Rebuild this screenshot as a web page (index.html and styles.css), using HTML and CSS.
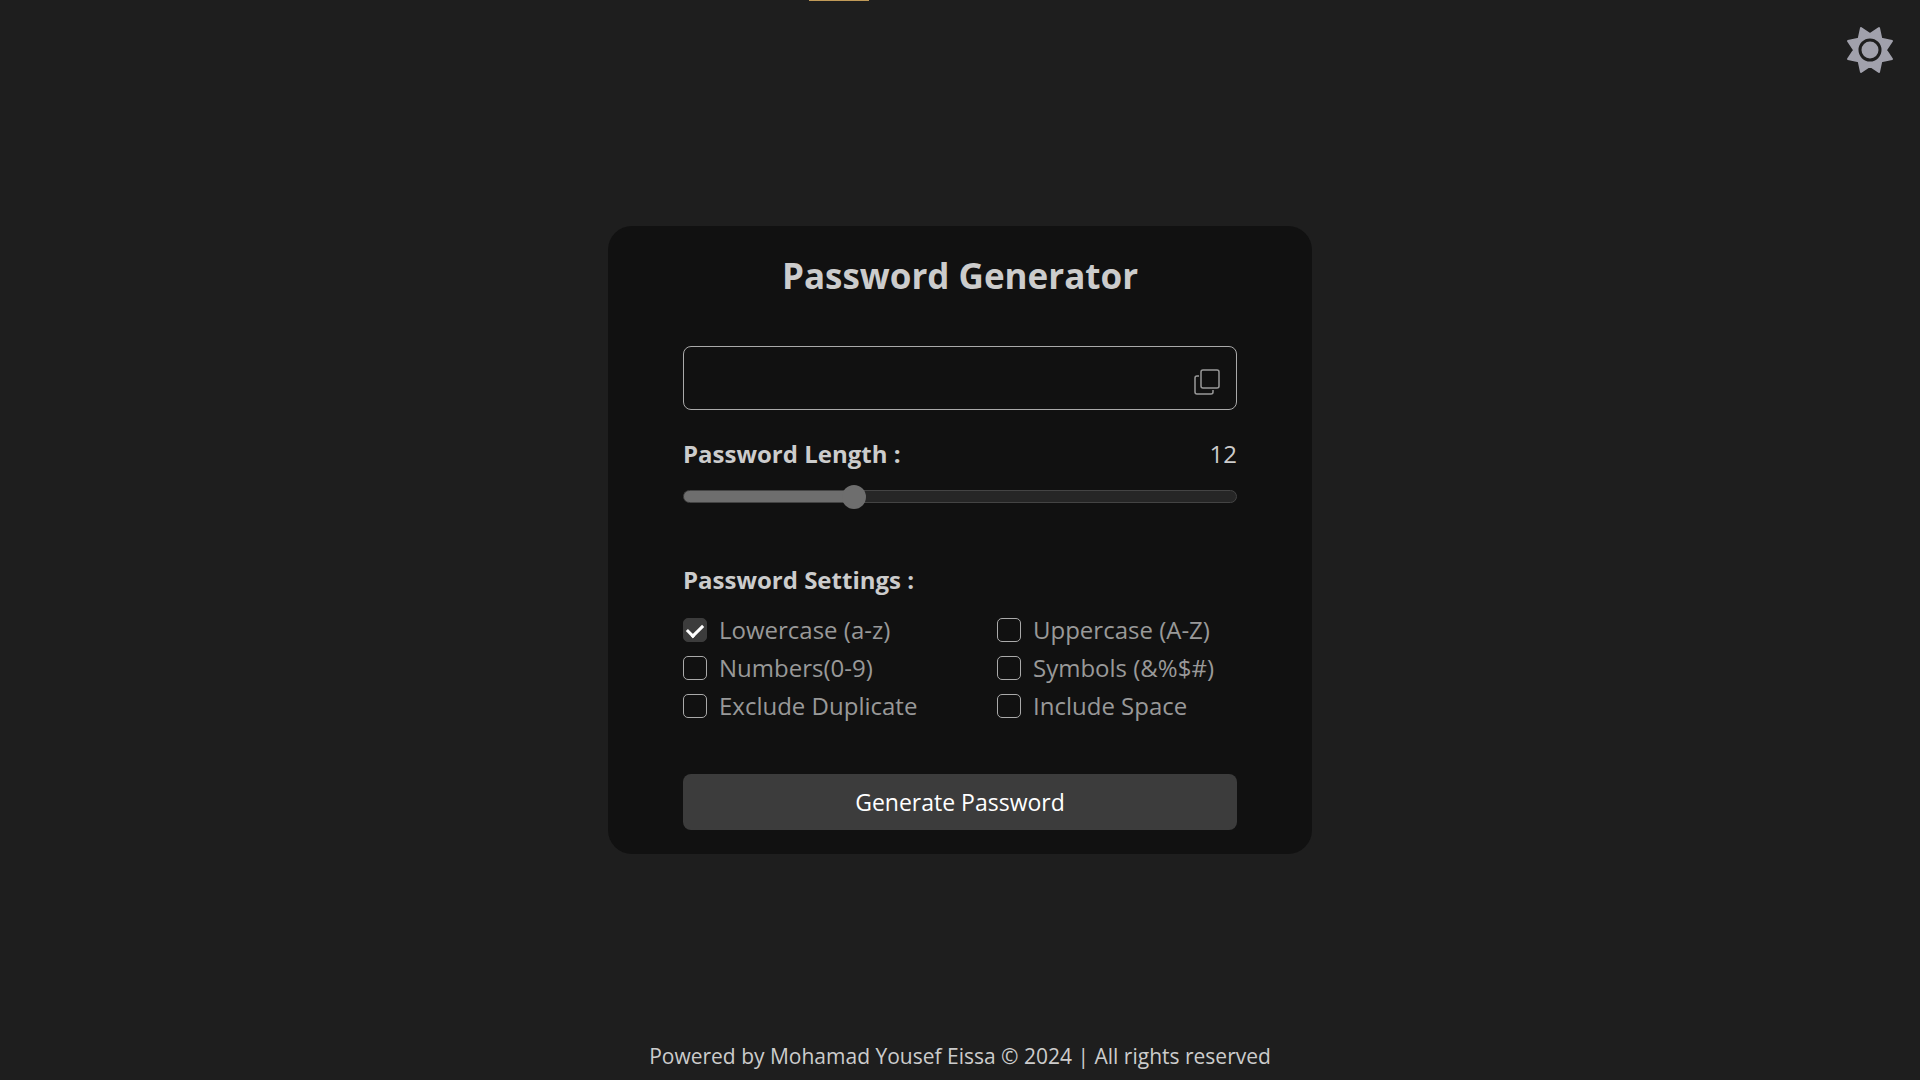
FILE: index.html
```html
<!DOCTYPE html>
<html lang="en">
<head>
  <meta charset="utf-8">
  <meta name="viewport" content="width=device-width, initial-scale=1">
  <title>Password Generator</title>
  <link rel="stylesheet" href="styles.css">
</head>
<body>
  <div class="notice-edge"></div>
  <header class="topbar">
    <button class="theme-toggle" type="button" aria-label="Toggle theme">
      <svg viewBox="-24 -24 48 48" width="48" height="48" aria-hidden="true">
        <path class="sun-rays" d="M0-16 9-22 11.3-11.3 22-9 16 0 22 9 11.3 11.3 9 22 0 16-9 22-11.3 11.3-22 9-16 0-22-9-11.3-11.3-9-22Z"/>
        <circle class="sun-ring" r="10"/>
      </svg>
    </button>
  </header>

  <main class="card">
    <h1 class="title">Password Generator</h1>

    <div class="output">
      <input class="output-field" type="text" readonly aria-label="Generated password">
      <button class="copy" type="button" aria-label="Copy password">
        <svg viewBox="0 0 26 26" width="26" height="26" aria-hidden="true">
          <rect x="7" y="1" width="18" height="18" rx="2"/>
          <path d="M5 7H3a2 2 0 0 0-2 2V23a2 2 0 0 0 2 2H17a2 2 0 0 0 2-2V21"/>
        </svg>
      </button>
    </div>

    <div class="length-row">
      <label class="heading" for="length">Password Length :</label>
      <output class="length-value" for="length">12</output>
    </div>
    <input class="slider" id="length" type="range" min="0" max="40" value="12">

    <fieldset class="settings">
      <legend class="heading">Password Settings :</legend>
      <div class="options">
        <label class="option"><input class="check" type="checkbox" checked>Lowercase (a-z)</label>
        <label class="option"><input class="check" type="checkbox">Uppercase (A-Z)</label>
        <label class="option"><input class="check" type="checkbox">Numbers(0-9)</label>
        <label class="option"><input class="check" type="checkbox">Symbols (&amp;%$#)</label>
        <label class="option"><input class="check" type="checkbox">Exclude Duplicate</label>
        <label class="option"><input class="check" type="checkbox">Include Space</label>
      </div>
    </fieldset>

    <button class="generate" type="button">Generate Password</button>
  </main>

  <footer class="footer">Powered by Mohamad Yousef Eissa © 2024 | All rights reserved</footer>
</body>
</html>
```

FILE: styles.css
```css
* {
  box-sizing: border-box;
}

body {
  margin: 0;
  min-height: 100vh;
  display: grid;
  grid-template-rows: 1fr auto 1fr;
  background: #1e1e1e;
  color: #ccc;
  font-family: "Segoe UI", "Open Sans", "Noto Sans", sans-serif;
  font-size: 24px;
  line-height: 36px;
}

button,
input {
  font: inherit;
}

.notice-edge {
  position: absolute;
  top: 0;
  left: calc(50% - 151px);
  width: 60px;
  height: 1px;
  background: #c09a58;
}

.topbar {
  display: flex;
  justify-content: flex-end;
  align-items: flex-start;
  padding: 26px;
}

.theme-toggle,
.copy {
  display: flex;
  padding: 0;
  border: 0;
  background: none;
  cursor: pointer;
}

.sun-rays {
  fill: #a1a1ac;
  stroke: #a1a1ac;
  stroke-width: 2;
  stroke-linejoin: round;
}

.sun-ring {
  fill: none;
  stroke: #1e1e1e;
  stroke-width: 3;
}

.card {
  width: 100%;
  max-width: 704px;
  margin: 0 auto;
  padding: 24px 75px;
  border-radius: 24px;
  background: #111;
}

.title {
  margin: 0 0 44px;
  font-size: 35px;
  line-height: 52px;
  font-weight: 700;
  text-align: center;
}

.output {
  display: flex;
  align-items: center;
  height: 64px;
  padding: 8px 16px 0;
  border: 1px solid #aaa;
  border-radius: 8px;
}

.output-field {
  flex: 1;
  min-width: 0;
  padding: 0;
  border: 0;
  outline: 0;
  background: none;
  color: inherit;
}

.copy svg {
  fill: none;
  stroke: #999;
  stroke-width: 1.5;
}

.length-row {
  display: flex;
  justify-content: space-between;
  margin-top: 26px;
}

.heading {
  padding: 0;
  font-weight: 700;
}

.slider {
  appearance: none;
  display: block;
  width: 100%;
  height: 24px;
  margin: 12px 0 54px;
  background: none;
}

.slider::-webkit-slider-runnable-track {
  height: 13px;
  border: 1px solid #444;
  border-radius: 8px;
  background: linear-gradient(to right, #6e6e6e 31%, #262626 31%);
}

.slider::-webkit-slider-thumb {
  appearance: none;
  width: 24px;
  height: 24px;
  margin-top: -6px;
  border-radius: 50%;
  background: #6e6e6e;
}

.settings {
  min-width: 0;
  margin: 0;
  padding: 0;
  border: 0;
}

.options {
  display: grid;
  grid-template-columns: 314px 1fr;
  row-gap: 2px;
  margin-top: 14px;
  color: #999;
}

.option {
  display: flex;
  align-items: center;
  gap: 12px;
}

.check {
  appearance: none;
  display: grid;
  place-items: center;
  flex: none;
  width: 24px;
  height: 24px;
  margin: 0;
  border: 1px solid #aaa;
  border-radius: 5px;
}

.check:checked {
  border-color: #3c3c3c;
  background: #3c3c3c;
}

.check:checked::before {
  content: "";
  width: 13px;
  height: 7px;
  border: solid #fff;
  border-width: 0 0 3px 3px;
  rotate: -45deg;
  translate: 0 -1px;
}

.generate {
  width: 100%;
  height: 56px;
  margin-top: 50px;
  padding: 0;
  border: 0;
  border-radius: 8px;
  background: #3c3c3c;
  color: #fff;
  font-size: 23px;
  cursor: pointer;
}

.footer {
  align-self: end;
  padding: 8px;
  font-size: 21px;
  line-height: 32px;
  text-align: center;
}
```
